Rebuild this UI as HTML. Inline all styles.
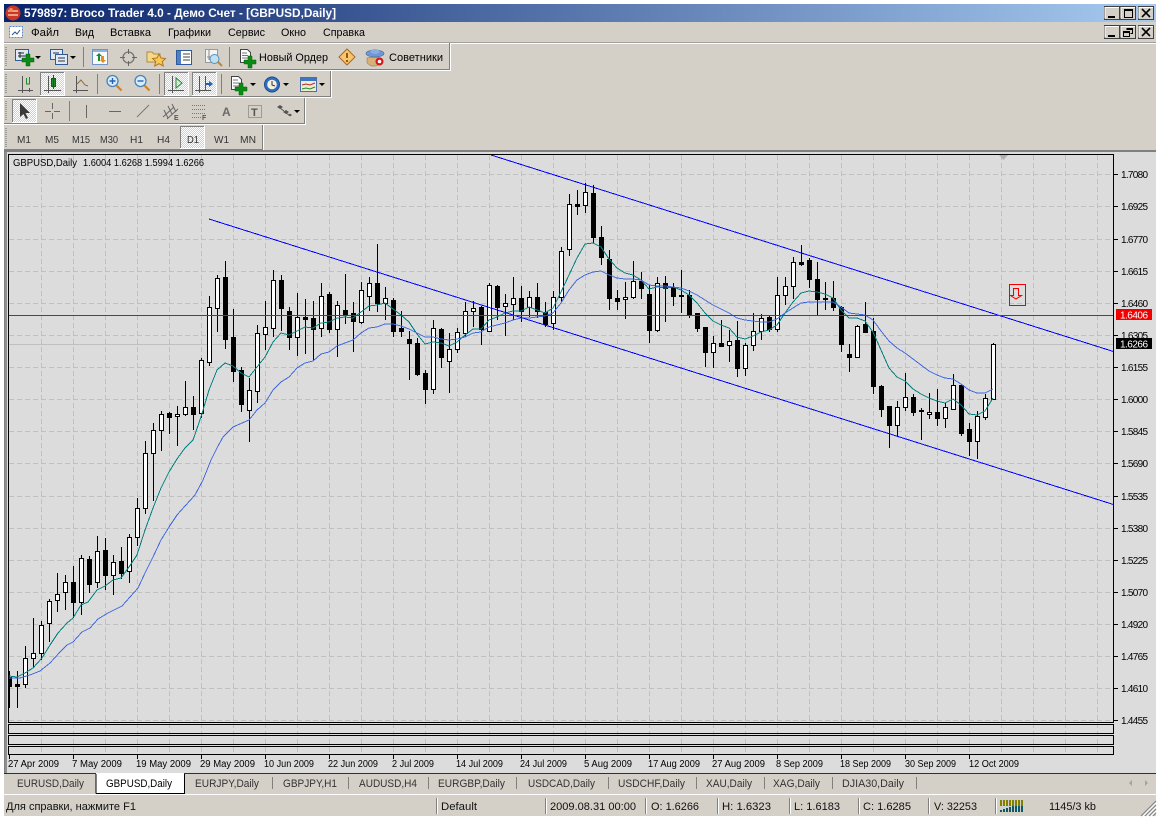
<!DOCTYPE html>
<html><head><meta charset="utf-8"><title>Broco Trader</title>
<style>
html,body{margin:0;padding:0;background:#fff;width:1160px;height:819px;overflow:hidden}
svg{display:block}
text{font-family:"Liberation Sans","Noto Sans CJK SC",sans-serif;font-size:11px;fill:#000}
.c{shape-rendering:crispEdges}
.p text{font-size:10px}
.t text{font-size:11px;fill:#333}
.s text{font-size:11px;fill:#111}
.m text{font-size:10.5px;fill:#333}
</style></head><body>
<svg width="1160" height="819" viewBox="0 0 1160 819" xmlns="http://www.w3.org/2000/svg">
<defs>
<linearGradient id="tb" x1="0" x2="1" y1="0" y2="0"><stop offset="0" stop-color="#0a246a"/><stop offset="1" stop-color="#a6caf0"/></linearGradient>
<pattern id="chk" width="2" height="2" patternUnits="userSpaceOnUse"><rect width="2" height="2" fill="#d4d0c8"/><rect width="1" height="1" fill="#fff"/><rect x="1" y="1" width="1" height="1" fill="#fff"/></pattern>
<clipPath id="cl"><rect x="9" y="155" width="1105" height="567"/></clipPath>
<linearGradient id="bl" x1="0" x2="0" y1="0" y2="1"><stop offset="0" stop-color="#dce8fa"/><stop offset="1" stop-color="#5c8ad0"/></linearGradient>
</defs>
<rect width="1160" height="819" fill="#fff"/>
<rect x="4" y="4" width="1152" height="813" fill="#d4d0c8"/>
<!-- title -->
<rect x="4" y="4" width="1152" height="18" fill="url(#tb)"/>
<circle cx="13" cy="13" r="7.5" fill="#c8372a"/><path d="M8 11h10M8 15h10" stroke="#f3c6a0" stroke-width="1.4"/><circle cx="11" cy="10" r="2" fill="#f08a60"/>
<text x="24" y="17" textLength="312" lengthAdjust="spacingAndGlyphs" style="font-size:12px;font-weight:bold;fill:#fff">579897: Broco Trader 4.0 - Демо Счет - [GBPUSD,Daily]</text>
<!-- window buttons -->
<g class="c">
<g fill="#d4d0c8" stroke="#404040"><rect x="1104.5" y="6.5" width="15" height="13"/><rect x="1120.5" y="6.5" width="15" height="13"/><rect x="1138.5" y="6.5" width="15" height="13"/><rect x="1104.5" y="25.5" width="15" height="13"/><rect x="1120.5" y="25.5" width="15" height="13"/><rect x="1138.5" y="25.5" width="15" height="13"/></g>
<path d="M1105 18.5V7.500h14M1121 18.5V7.500h14M1139 18.5V7.500h14M1105 37.500V26.500h14M1121 37.500V26.500h14M1139 37.500V26.500h14" fill="none" stroke="#fff"/>
<path d="M1108 16h7v2h-7zM1108 35h7v2h-7z" fill="#000"/>
<path d="M1124.500 9.500h8v8h-8zM1124.500 10.500h8" fill="none" stroke="#000"/>
<path d="M1126.500 28.500h6v5h-2M1126.500 29.500h6M1123.500 31.500h6v5h-6zM1123.500 32.500h6" fill="none" stroke="#000"/>
</g>
<path d="M1142 9l8 8M1150 9l-8 8M1142 28l8 8M1150 28l-8 8" stroke="#000" stroke-width="1.600"/>
<!-- menu -->
<g><rect x="9.500" y="26.500" width="13" height="11" fill="#fff" stroke="#5c8ad0" stroke-dasharray="2 1"/><path d="M12 35l3-3 2 2 3-4" stroke="#305090" fill="none"/></g>
<text x="31" y="36" textLength="28" lengthAdjust="spacingAndGlyphs">Файл</text>
<text x="75" y="36" textLength="19" lengthAdjust="spacingAndGlyphs">Вид</text>
<text x="110" y="36" textLength="41" lengthAdjust="spacingAndGlyphs">Вставка</text>
<text x="168" y="36" textLength="43" lengthAdjust="spacingAndGlyphs">Графики</text>
<text x="228" y="36" textLength="37" lengthAdjust="spacingAndGlyphs">Сервис</text>
<text x="281" y="36" textLength="25" lengthAdjust="spacingAndGlyphs">Окно</text>
<text x="323" y="36" textLength="42" lengthAdjust="spacingAndGlyphs">Справка</text>
<!-- toolbar frames -->
<g class="c">
<rect x="4" y="43" width="1152" height="1" fill="#fff"/><rect x="4" y="42" width="1152" height="1" fill="#a0a0a0"/>
<path d="M4 69.500H449.500V43M4 96.500H330.500V71M4 123.500H304.500V98M4 149.500H262.500V125" fill="none" stroke="#808080"/>
<path d="M4 70.500H450.500V43M4 97.500H331.500V71M4 124.500H305.500V98M4 150.500H263.500V125" fill="none" stroke="#fff"/>
<path d="M6 47v20M6 74v20M6 101v20M6 128v19" stroke="#9a9a9a" stroke-width="2" stroke-dasharray="1 1"/>
<path d="M83.500 47v20M229.500 47v20M97.500 74v20M159.500 74v20M221.500 74v20M69.500 101v20" stroke="#808080"/>
<!-- pressed buttons -->
<g fill="url(#chk)"><rect x="40" y="72" width="25" height="24"/><rect x="164" y="72" width="25" height="24"/><rect x="192" y="72" width="25" height="24"/><rect x="12" y="99" width="25" height="24"/><rect x="180" y="126" width="25" height="23"/></g>
<path d="M40.500 95V72.500H65M164.500 95V72.500H189M192.500 95V72.500H217M12.500 122V99.500H37M180.500 148V126.500H205" fill="none" stroke="#808080"/>
<path d="M40 95.500H64.500V72M164 95.500H188.500V72M192 95.500H216.500V72M12 122.500H36.500V99M180 148.500H204.500V126" fill="none" stroke="#fff"/>
</g>
<!-- dropdown arrows -->
<path d="M35 56h6l-3 3zM70 56h6l-3 3zM250 83h6l-3 3zM283 83h6l-3 3zM319 83h6l-3 3zM294 110h6l-3 3z" fill="#000"/>
<!-- row 1 icons -->
<g>
<rect x="15.500" y="49.500" width="13" height="11" fill="#dfe9f8" stroke="#2f5a9a"/><path d="M18 53h6M18 56h8M20 52v6" stroke="#222"/>
<path d="M26 54h4v4h4v4h-4v4h-4v-4h-4v-4h4z" fill="#0b8a14" stroke="#075f0e" stroke-width=".5"/>
<rect x="50.500" y="49.500" width="12" height="10" fill="#dfe9f8" stroke="#2f5a9a"/><rect x="55.500" y="54.500" width="12" height="10" fill="#dfe9f8" stroke="#2f5a9a"/><path d="M53 53h6M58 58h7M58 61h7" stroke="#333"/>
<rect x="92.500" y="49.500" width="15" height="15" fill="#f7fbff" stroke="#6e94c8"/><rect x="93" y="50" width="14" height="2" fill="#8fb4e4"/><path d="M98 61v-5h-2l3-3 3 3h-2v5z" fill="#1c8c28"/><path d="M101 56h3v4h2l-3 3-3-3h1z" fill="#e09020"/>
<circle cx="128.500" cy="57.500" r="5.500" fill="none" stroke="#777" stroke-width="1.300"/><path d="M128.500 49v5M128.500 61v5M120 57.500h5M132 57.500h5" stroke="#666"/>
<path d="M147 52h5l2 2h6v8h-13z" fill="#f3d98c" stroke="#b08a3a"/><path d="M159 54l2 4 4.500 .5-3.200 3 1 4.500-4.300-2.300-4.300 2.300 1-4.500-3.200-3 4.500-.5z" fill="#f7c85a" stroke="#b5761a"/>
<rect x="176.500" y="50.500" width="15" height="14" fill="#fff" stroke="#2f5a9a"/><rect x="177" y="51" width="4" height="13" fill="#4f7fc8"/><path d="M183 54h7M183 57h7M183 60h7" stroke="#444"/>
<rect x="205.500" y="49.500" width="12" height="13" fill="#f4f4f4" stroke="#999"/><path d="M209 50v10M207 57h8" stroke="#888"/><circle cx="214.500" cy="59" r="4.500" fill="#bfe0f2" stroke="#5790b8"/><path d="M218 62l4 4" stroke="#c8852a" stroke-width="2"/>
<path d="M240.500 49.500h7l3 3v10h-10z" fill="#fff" stroke="#444"/><path d="M242 53h5M242 55.500h6M242 58h6" stroke="#777"/>
<path d="M248 56h4v4h4v4h-4v4h-4v-4h-4v-4h4z" fill="#0b8a14" stroke="#075f0e" stroke-width=".5"/>
<path d="M347 49l8 8-8 8-8-8z" fill="#f7c56a" stroke="#a8682a"/><path d="M347 53v5M347 60v2" stroke="#8a4a10" stroke-width="1.800"/>
<path d="M367 58c3-1 11-1 14 0l-1 6-4 2h-5l-4-3z" fill="#d9b077" stroke="#8a6a3a" stroke-width=".5"/><ellipse cx="375" cy="53.500" rx="9" ry="3.500" fill="#6f97d8" stroke="#3d628f" stroke-width=".6"/><ellipse cx="375" cy="51.500" rx="4.500" ry="2.500" fill="#88aee2"/><circle cx="379.500" cy="61.500" r="4" fill="#d91616"/><circle cx="379.500" cy="61.500" r="1.800" fill="#fff"/>
</g>
<text x="259" y="61" textLength="69" lengthAdjust="spacingAndGlyphs">Новый Ордер</text>
<text x="389" y="61" textLength="54" lengthAdjust="spacingAndGlyphs">Советники</text>
<!-- row 2 icons -->
<g fill="none" stroke="#555">
<path d="M22.500 76v17M29.500 88v4M18 90.500h15" class="c"/><path d="M26.500 78v6h3v-7" stroke="#1c8c28" class="c"/>
<path d="M48.500 76v17M18 0" class="c"/><path d="M44 90.500h17" class="c"/><rect x="51.500" y="78.500" width="4" height="8" fill="#1c8c28" stroke="#0e5e16" class="c"/><path d="M53.500 75v14" stroke="#0e5e16" class="c"/>
<path d="M76.500 76v17M73 90.500h15" class="c"/><path d="M77 84l4-4 4 5 3 1" stroke="#8a6a3a"/>
</g>
<circle cx="112.500" cy="81" r="5.500" fill="#d7ecfa" stroke="#4a85b8" stroke-width="1.300"/><path d="M109.500 81h6M112.500 78v6" stroke="#2a62b0" stroke-width="1.400"/><path d="M116.500 85.500l5 5" stroke="#c8852a" stroke-width="2.200"/>
<circle cx="140.500" cy="81" r="5.500" fill="#d7ecfa" stroke="#4a85b8" stroke-width="1.300"/><path d="M137.500 81h6" stroke="#2a62b0" stroke-width="1.400"/><path d="M144.500 85.500l5 5" stroke="#c8852a" stroke-width="2.200"/>
<g class="c" fill="none" stroke="#555"><path d="M172.500 76v17M168 90.500h16M199.500 76v17M195 90.500h16M205.500 76v14"/></g>
<path d="M176 78l6 5-6 5z" fill="none" stroke="#1c8c28"/><path d="M213 84l-4-3v2h-3v2h3v2z" fill="#1f5fb8"/>
<path d="M231.500 76.500h7l3 3v10h-10z" fill="#fff" stroke="#444"/><path d="M233 80h5M233 83h6M233 86h6" stroke="#777"/>
<path d="M239 83h4v4h4v4h-4v4h-4v-4h-4v-4h4z" fill="#0b8a14" stroke="#075f0e" stroke-width=".5"/>
<circle cx="272" cy="84.500" r="7.500" fill="#2f6ec0" stroke="#1d4a8a"/><circle cx="272" cy="84.500" r="4.800" fill="#f5efe0"/><path d="M272 81v4l3 1" stroke="#333" fill="none"/>
<rect x="300.500" y="77.500" width="16" height="14" fill="#f1ead8" stroke="#4a6ea8"/><rect x="301" y="78" width="15" height="3" fill="#3f74c4"/><path d="M302 85l4-1 4 1 5-2" stroke="#b03020" fill="none"/><path d="M302 89l4-1 4 1 5-2" stroke="#1c8c28" fill="none"/>
<!-- row 3 icons -->
<path d="M20 103l0 14 3.500-3 2.500 5 2-1-2.500-5h4.500z" fill="#3a3a3a"/>
<g stroke="#666" class="c"><path d="M52.500 103v6M52.500 113v6M45 111.500h6M54 111.500h6M86.500 105v13M109 111.500h12"/></g>
<path d="M137 117l12-12" stroke="#777" fill="none"/>
<path d="M163 117l11-10M167 119l11-10M168 106l4 8M172 104l4 8M164 110l4 8" stroke="#666" fill="none"/>
<text x="174" y="120" style="font-size:7px;font-weight:bold;fill:#555">E</text>
<path d="M192 105.500h14M192 109.500h14M192 113.500h14M192 117.500h9" stroke="#777" stroke-dasharray="1 1" class="c"/>
<text x="202" y="120" style="font-size:7px;font-weight:bold;fill:#555">F</text>
<text x="222" y="116" style="font-size:12px;font-weight:bold;fill:#6a6a6a">A</text>
<rect x="248.500" y="105.500" width="13" height="12" fill="none" stroke="#666" stroke-dasharray="1 1" class="c"/><text x="251" y="116" style="font-size:11px;font-weight:bold;fill:#555">T</text>
<path d="M277 107l3-2 3 2-3 2zM283 112l3-2 3 2-3 2zM288 115l2-1.500 2 1.500-2 1.500z" fill="#555"/><path d="M280 108l4 3M286 113l3 2" stroke="#555"/>
<!-- row 4 -->
<g class="m">
<text x="17" y="143" textLength="14" lengthAdjust="spacingAndGlyphs">M1</text>
<text x="45" y="143" textLength="14" lengthAdjust="spacingAndGlyphs">M5</text>
<text x="72" y="143" textLength="18" lengthAdjust="spacingAndGlyphs">M15</text>
<text x="100" y="143" textLength="18" lengthAdjust="spacingAndGlyphs">M30</text>
<text x="130" y="143" textLength="13" lengthAdjust="spacingAndGlyphs">H1</text>
<text x="157" y="143" textLength="13" lengthAdjust="spacingAndGlyphs">H4</text>
<text x="187" y="143" textLength="12" lengthAdjust="spacingAndGlyphs">D1</text>
<text x="214" y="143" textLength="15" lengthAdjust="spacingAndGlyphs">W1</text>
<text x="240" y="143" textLength="16" lengthAdjust="spacingAndGlyphs">MN</text>
</g>
<!-- chart window -->
<rect x="4" y="151" width="1152" height="622" fill="#dcdcdc"/>
<g class="c"><rect x="4" y="150" width="1152" height="2" fill="#808080"/><rect x="4" y="150" width="3" height="623" fill="#808080"/><rect x="5" y="152" width="2" height="621" fill="#909090"/></g>
<!-- grid -->
<g class="c" stroke="#c0c0c0" stroke-dasharray="5 3" fill="none">
<path d="M41.500 155V754M73.500 155V754M105.500 155V754M137.500 155V754M169.500 155V754M201.500 155V754M233.500 155V754M265.500 155V754M297.500 155V754M329.500 155V754M361.500 155V754M393.500 155V754M425.500 155V754M457.500 155V754M489.500 155V754M521.500 155V754M553.500 155V754M585.500 155V754M617.500 155V754M649.500 155V754M681.500 155V754M713.500 155V754M745.500 155V754M777.500 155V754M809.500 155V754M841.500 155V754M873.500 155V754M905.500 155V754M937.500 155V754M969.500 155V754M1001.500 155V754M1033.500 155V754M1065.500 155V754M1097.500 155V754"/>
<path d="M9 174.500H1114M9 206.500H1114M9 239.500H1114M9 271.500H1114M9 303.500H1114M9 335.500H1114M9 367.500H1114M9 399.500H1114M9 431.500H1114M9 463.500H1114M9 496.500H1114M9 528.500H1114M9 560.500H1114M9 592.500H1114M9 624.500H1114M9 656.500H1114M9 688.500H1114M9 720.500H1114"/>
</g>
<rect class="c" x="9" y="344" width="1105" height="1" fill="#c0c0c0"/>
<g clip-path="url(#cl)">
<g class="c" fill="none" stroke="#000">
<path d="M9.500 671V708M17.500 671V708M25.500 646V688M33.500 618V668M41.500 621V660M49.500 599V642M57.500 573V612M65.500 575V610M73.500 566V618M81.500 555V615M89.500 556V593M97.500 536V588M105.500 538V590M113.500 555V595M121.500 547V579M129.500 534V583M137.500 498V546M145.500 441V514M153.500 423V501M161.500 411V451M169.500 412V434M177.500 406V446M185.500 381V416M193.500 396V430M201.500 358V418M209.500 296V366M217.500 275V332M225.500 261V349M233.500 309V382M241.500 367V412M249.500 378V442M257.500 325V403M265.500 301V350M273.500 270V337M281.500 275V331M289.500 307V350M297.500 293V356M305.500 299V354M313.500 301V361M321.500 283V337M329.500 292V333M337.500 301V357M345.500 274V324M353.500 302V352M361.500 282V324M369.500 277V311M377.500 244V312M385.500 287V320M393.500 298V337M401.500 311V337M409.500 331V380M417.500 338V376M425.500 370V404M433.500 320V394M441.500 328V368M449.500 333V393M457.500 328V353M465.500 302V337M473.500 301V327M481.500 306V345M489.500 283V332M497.500 285V320M505.500 294V336M513.500 277V320M521.500 286V322M529.500 291V317M537.500 283V318M545.500 302V327M553.500 291V330M561.500 247V302M569.500 194V256M577.500 190V215M585.500 183V213M593.500 185V243M601.500 226V265M609.500 250V310M617.500 290V310M625.500 282V319M633.500 261V299M641.500 272V299M649.500 285V343M657.500 277V332M665.500 276V322M673.500 283V306M681.500 270V313M689.500 290V318M697.500 313V332M705.500 327V367M713.500 336V368M721.500 320V347M729.500 330V362M737.500 321V377M745.500 343V376M753.500 313V351M761.500 314V340M769.500 315V332M777.500 277V332M785.500 277V305M793.500 257V299M801.500 245V266M809.500 258V288M817.500 262V315M825.500 282V310M833.500 281V311M841.500 306V352M849.500 344V372M857.500 325V357M865.500 302V332M873.500 318V394M881.500 385V417M889.500 406V448M897.500 401V436M905.500 373V411M913.500 394V416M921.500 408V440M929.500 393V419M937.500 389V426M945.500 403V428M953.500 374V410M961.500 385V436M969.500 423V456M977.500 411V459M985.500 394V420M993.500 343V400"/>
<path fill="#fff" d="M23.500 658.500h4V684.500h-4zM31.500 653.500h4V658.500h-4zM39.500 625.500h4V653.500h-4zM47.500 601.500h4V623.500h-4zM55.500 594.500h4V600.500h-4zM63.500 582.500h4V592.500h-4zM79.500 558.500h4V602.500h-4zM95.500 551.500h4V582.500h-4zM111.500 562.500h4V575.500h-4zM127.500 537.500h4V571.500h-4zM135.500 508.500h4V537.500h-4zM143.500 453.500h4V508.500h-4zM151.500 430.500h4V453.500h-4zM159.500 414.500h4V430.500h-4zM175.500 414.500h4V416.500h-4zM183.500 407.500h4V414.500h-4zM199.500 360.500h4V413.500h-4zM207.500 307.500h4V362.500h-4zM215.500 278.500h4V308.500h-4zM247.500 390.500h4V410.500h-4zM255.500 333.500h4V391.500h-4zM263.500 327.500h4V334.500h-4zM271.500 280.500h4V328.500h-4zM295.500 317.500h4V337.500h-4zM319.500 296.500h4V328.500h-4zM335.500 305.500h4V329.500h-4zM359.500 290.500h4V322.500h-4zM367.500 283.500h4V296.500h-4zM383.500 298.500h4V303.500h-4zM431.500 328.500h4V389.500h-4zM447.500 349.500h4V361.500h-4zM455.500 332.500h4V349.500h-4zM463.500 311.500h4V333.500h-4zM471.500 308.500h4V311.500h-4zM487.500 285.500h4V331.500h-4zM503.500 303.500h4V306.500h-4zM511.500 298.500h4V304.500h-4zM527.500 297.500h4V307.500h-4zM551.500 297.500h4V323.500h-4zM559.500 251.500h4V297.500h-4zM567.500 204.500h4V249.500h-4zM583.500 192.500h4V205.500h-4zM623.500 297.500h4V299.500h-4zM631.500 281.500h4V297.500h-4zM655.500 283.500h4V330.500h-4zM711.500 343.500h4V352.500h-4zM727.500 341.500h4V345.500h-4zM743.500 345.500h4V368.500h-4zM751.500 331.500h4V345.500h-4zM759.500 318.500h4V331.500h-4zM775.500 295.500h4V329.500h-4zM783.500 286.500h4V295.500h-4zM791.500 262.500h4V286.500h-4zM855.500 326.500h4V357.500h-4zM895.500 407.500h4V425.500h-4zM903.500 397.500h4V407.500h-4zM927.500 412.500h4V414.500h-4zM943.500 407.500h4V418.500h-4zM951.500 385.500h4V409.500h-4zM975.500 416.500h4V441.500h-4zM983.500 398.500h4V417.500h-4zM991.500 344.500h4V399.500h-4z"/>
<path fill="#000" d="M7.500 677.500h4V686.500h-4zM15.500 684.500h4V686.500h-4zM71.500 582.500h4V602.500h-4zM87.500 559.500h4V584.500h-4zM103.500 550.500h4V575.500h-4zM119.500 561.500h4V573.500h-4zM167.500 413.500h4V417.500h-4zM191.500 407.500h4V414.500h-4zM223.500 277.500h4V339.500h-4zM231.500 337.500h4V371.500h-4zM239.500 370.500h4V404.500h-4zM279.500 280.500h4V308.500h-4zM287.500 311.500h4V337.500h-4zM303.500 317.500h4V319.500h-4zM311.500 318.500h4V329.500h-4zM327.500 294.500h4V329.500h-4zM343.500 310.500h4V314.500h-4zM351.500 313.500h4V321.500h-4zM375.500 283.500h4V303.500h-4zM391.500 300.500h4V331.500h-4zM399.500 328.500h4V331.500h-4zM407.500 339.500h4V343.500h-4zM415.500 343.500h4V374.500h-4zM423.500 373.500h4V389.500h-4zM439.500 329.500h4V357.500h-4zM479.500 307.500h4V329.500h-4zM495.500 286.500h4V307.500h-4zM519.500 298.500h4V311.500h-4zM535.500 297.500h4V311.500h-4zM543.500 312.500h4V324.500h-4zM575.500 204.500h4V206.500h-4zM591.500 193.500h4V237.500h-4zM599.500 237.500h4V257.500h-4zM607.500 259.500h4V298.500h-4zM615.500 298.500h4V301.500h-4zM639.500 281.500h4V288.500h-4zM647.500 294.500h4V330.500h-4zM663.500 283.500h4V288.500h-4zM671.500 287.500h4V296.500h-4zM679.500 295.500h4V296.500h-4zM687.500 295.500h4V314.500h-4zM695.500 313.500h4V328.500h-4zM703.500 327.500h4V352.500h-4zM719.500 343.500h4V346.500h-4zM735.500 340.500h4V368.500h-4zM767.500 317.500h4V329.500h-4zM799.500 262.500h4V264.500h-4zM807.500 260.500h4V279.500h-4zM815.500 279.500h4V299.500h-4zM823.500 298.500h4V299.500h-4zM831.500 298.500h4V307.500h-4zM839.500 307.500h4V344.500h-4zM847.500 354.500h4V357.500h-4zM863.500 324.500h4V332.500h-4zM871.500 331.500h4V386.500h-4zM879.500 386.500h4V409.500h-4zM887.500 406.500h4V425.500h-4zM911.500 397.500h4V412.500h-4zM919.500 410.500h4V411.500h-4zM935.500 412.500h4V418.500h-4zM959.500 385.500h4V433.500h-4zM967.500 429.500h4V441.500h-4z"/>
</g>
<polyline fill="none" stroke="#008080" class="c" points="9,676 17,677 25,673 33,668 42,658 50,645 58,633 67,623 73,618 81,605 88,602 97,590 105,586 113,580 121,578 129,567 137,555 145,530 153,508 161,488 169,472 177,459 185,448 193,440 201,417 209,390 217,370 225,363 233,366 241,373 249,377 257,367 265,357 273,342 281,333 289,335 297,331 305,327 313,328 321,323 329,322 337,318 345,317 353,318 361,312 369,306 377,305 385,303 393,309 401,315 409,322 417,334 425,344 433,342 441,343 449,346 457,342 465,335 473,329 481,329 489,320 497,317 505,313 513,311 521,311 529,307 537,310 545,313 553,308 561,292 569,275 577,258 585,244 593,243 601,247 609,259 617,268 625,273 633,275 641,280 649,289 657,287 665,288 673,287 681,290 689,295 697,303 705,313 713,321 721,325 729,328 737,337 745,339 753,336 761,332 769,330 777,325 785,313 793,302 801,293 809,291 817,292 825,294 833,298 841,310 849,318 857,318 865,321 873,332 881,350 889,368 897,377 905,381 913,389 921,394 929,398 937,401 945,403 953,399 961,405 969,414 977,415 985,411 993,398"/>
<polyline fill="none" stroke="#4169e1" class="c" points="9,678 20,678 30,675 40,671 50,663 60,652 67,645 73,642 82,632 90,628 98,619 108,613 122,606 130,597 138,588 145,573 153,557 161,540 169,527 177,515 185,506 195,495 203,480 211,460 217,448 223,437 233,427 249,420 257,410 265,403 273,390 281,382 289,377 297,368 305,363 313,361 321,354 329,352 337,346 345,343 353,340 361,333 369,328 377,327 385,324 393,324 401,326 409,329 417,333 425,337 433,337 441,339 449,340 457,339 465,337 473,333 481,332 489,327 497,325 505,323 513,320 521,318 529,318 537,317 545,316 553,313 561,303 569,290 577,280 585,275 593,272 601,271 609,275 617,278 625,279 633,279 641,280 649,285 657,286 665,286 673,287 681,288 689,291 697,295 705,300 713,305 721,309 729,313 737,318 745,320 753,321 761,322 769,322 777,319 785,313 793,308 801,303 809,302 817,302 825,302 833,302 841,307 849,313 857,314 865,315 873,320 881,331 889,341 897,348 905,353 913,359 921,365 929,371 937,375 945,378 953,379 961,384 969,390 977,393 985,393 993,389"/>
<path d="M491 155L1115 352M209 219L1115 505" stroke="#0000ff" class="c" fill="none"/>
<rect class="c" x="9" y="315" width="1105" height="1" fill="#f00000"/>
</g>
<path d="M999 155h9l-4.500 5z" fill="#b0b0b0"/>
<!-- arrow object -->
<rect class="c" x="1009.500" y="284.500" width="16" height="21" fill="none" stroke="#f00000"/>
<path d="M1013.500 288.500h5v7h3l-5.500 3.500-5.500-3.500h3z" fill="none" stroke="#f00000"/>
<!-- frames -->
<g class="c" fill="none" stroke="#000">
<rect x="8.500" y="154.500" width="1105" height="568"/>
<rect x="8.500" y="724.500" width="1105" height="9"/>
<rect x="8.500" y="735.500" width="1105" height="9"/>
<rect x="8.500" y="746.500" width="1105" height="8"/>
<path d="M1114 174.500h4M1114 206.500h4M1114 239.500h4M1114 271.500h4M1114 303.500h4M1114 335.500h4M1114 367.500h4M1114 399.500h4M1114 431.500h4M1114 463.500h4M1114 496.500h4M1114 528.500h4M1114 560.500h4M1114 592.500h4M1114 624.500h4M1114 656.500h4M1114 688.500h4M1114 720.500h4"/>
<path d="M9.500 755v4M73.500 755v4M137.500 755v4M201.500 755v4M265.500 755v4M329.500 755v4M393.500 755v4M457.500 755v4M521.500 755v4M585.500 755v4M649.500 755v4M713.500 755v4M777.500 755v4M841.500 755v4M905.500 755v4M969.500 755v4"/>
</g>
<g class="p">
<text x="13" y="166" textLength="64" lengthAdjust="spacingAndGlyphs">GBPUSD,Daily</text>
<text x="83" y="166" textLength="121" lengthAdjust="spacingAndGlyphs">1.6004 1.6268 1.5994 1.6266</text>
<text x="1121" y="178" textLength="27">1.7080</text>
<text x="1121" y="210" textLength="27">1.6925</text>
<text x="1121" y="243" textLength="27">1.6770</text>
<text x="1121" y="275" textLength="27">1.6615</text>
<text x="1121" y="307" textLength="27">1.6460</text>
<text x="1121" y="339" textLength="27">1.6305</text>
<text x="1121" y="371" textLength="27">1.6155</text>
<text x="1121" y="403" textLength="27">1.6000</text>
<text x="1121" y="435" textLength="27">1.5845</text>
<text x="1121" y="467" textLength="27">1.5690</text>
<text x="1121" y="500" textLength="27">1.5535</text>
<text x="1121" y="532" textLength="27">1.5380</text>
<text x="1121" y="564" textLength="27">1.5225</text>
<text x="1121" y="596" textLength="27">1.5070</text>
<text x="1121" y="628" textLength="27">1.4920</text>
<text x="1121" y="660" textLength="27">1.4765</text>
<text x="1121" y="692" textLength="27">1.4610</text>
<text x="1121" y="724" textLength="27">1.4455</text>
<rect class="c" x="1116" y="309" width="36" height="11" fill="#f00000"/>
<text x="1120" y="318.500" textLength="28" style="fill:#fff;font-size:10px">1.6406</text>
<rect class="c" x="1116" y="338" width="36" height="11" fill="#000"/>
<text x="1120" y="347.500" textLength="28" style="fill:#fff;font-size:10px">1.6266</text>
<text x="8" y="767" textLength="51" lengthAdjust="spacingAndGlyphs">27 Apr 2009</text>
<text x="72" y="767" textLength="50" lengthAdjust="spacingAndGlyphs">7 May 2009</text>
<text x="136" y="767" textLength="55" lengthAdjust="spacingAndGlyphs">19 May 2009</text>
<text x="200" y="767" textLength="55" lengthAdjust="spacingAndGlyphs">29 May 2009</text>
<text x="264" y="767" textLength="50" lengthAdjust="spacingAndGlyphs">10 Jun 2009</text>
<text x="328" y="767" textLength="50" lengthAdjust="spacingAndGlyphs">22 Jun 2009</text>
<text x="392" y="767" textLength="42" lengthAdjust="spacingAndGlyphs">2 Jul 2009</text>
<text x="456" y="767" textLength="47" lengthAdjust="spacingAndGlyphs">14 Jul 2009</text>
<text x="520" y="767" textLength="47" lengthAdjust="spacingAndGlyphs">24 Jul 2009</text>
<text x="584" y="767" textLength="48" lengthAdjust="spacingAndGlyphs">5 Aug 2009</text>
<text x="648" y="767" textLength="52" lengthAdjust="spacingAndGlyphs">17 Aug 2009</text>
<text x="712" y="767" textLength="53" lengthAdjust="spacingAndGlyphs">27 Aug 2009</text>
<text x="776" y="767" textLength="47" lengthAdjust="spacingAndGlyphs">8 Sep 2009</text>
<text x="840" y="767" textLength="51" lengthAdjust="spacingAndGlyphs">18 Sep 2009</text>
<text x="905" y="767" textLength="51" lengthAdjust="spacingAndGlyphs">30 Sep 2009</text>
<text x="969" y="767" textLength="50" lengthAdjust="spacingAndGlyphs">12 Oct 2009</text>
</g>
<!-- tab bar -->
<g class="c">
<rect x="4" y="773" width="1152" height="21" fill="#d4d0c8"/>
<rect x="4" y="773" width="1152" height="1" fill="#303030"/>
<rect x="96" y="773" width="88" height="20" fill="#fff"/>
<path d="M184.500 774V793.500H96M96 793.500V774" fill="none" stroke="#000"/>
<path d="M272.500 777v12M348.500 777v12M428.500 777v12M516.500 777v12M608.500 777v12M696.500 777v12M764.500 777v12M832.500 777v12M916.500 777v12" stroke="#808080"/>
<rect x="4" y="794" width="1152" height="1" fill="#fff"/>
<rect x="4" y="816" width="1152" height="3" fill="#fff"/>
</g>
<g class="t">
<text x="17" y="787" textLength="67" lengthAdjust="spacingAndGlyphs">EURUSD,Daily</text>
<text x="106" y="787" textLength="66" lengthAdjust="spacingAndGlyphs" style="fill:#000">GBPUSD,Daily</text>
<text x="195" y="787" textLength="64" lengthAdjust="spacingAndGlyphs">EURJPY,Daily</text>
<text x="283" y="787" textLength="54" lengthAdjust="spacingAndGlyphs">GBPJPY,H1</text>
<text x="359" y="787" textLength="58" lengthAdjust="spacingAndGlyphs">AUDUSD,H4</text>
<text x="438" y="787" textLength="67" lengthAdjust="spacingAndGlyphs">EURGBP,Daily</text>
<text x="528" y="787" textLength="67" lengthAdjust="spacingAndGlyphs">USDCAD,Daily</text>
<text x="618" y="787" textLength="67" lengthAdjust="spacingAndGlyphs">USDCHF,Daily</text>
<text x="706" y="787" textLength="46" lengthAdjust="spacingAndGlyphs">XAU,Daily</text>
<text x="773" y="787" textLength="47" lengthAdjust="spacingAndGlyphs">XAG,Daily</text>
<text x="842" y="787" textLength="62" lengthAdjust="spacingAndGlyphs">DJIA30,Daily</text>
</g>
<path d="M1132 780v6l-3-3zM1145 780v6l3-3z" fill="#a8a49c"/>
<!-- status -->
<g class="c">
<path d="M436.500 798v16M545.500 798v16M645.500 798v16M717.500 798v16M789.500 798v16M858.500 798v16M928.500 798v16M995.500 798v16" stroke="#808080"/>
<path d="M437.500 798v16M546.500 798v16M646.500 798v16M718.500 798v16M790.500 798v16M859.500 798v16M929.500 798v16M996.500 798v16" stroke="#fff"/>
<path d="M1000 800h2v6h-2zM1003 800h2v6h-2zM1006 800h2v6h-2zM1009 800h2v6h-2zM1012 800h2v6h-2zM1015 800h2v6h-2zM1018 800h2v6h-2zM1021 800h2v6h-2z" fill="#808000"/>
<path d="M1000 810h2v2h-2zM1003 809h2v3h-2zM1006 808h2v4h-2zM1009 807h2v5h-2zM1012 806h2v6h-2zM1015 806h2v6h-2zM1018 806h2v6h-2zM1021 806h2v6h-2z" fill="#0a5a6a"/>
</g>
<path d="M1141 816l15-15M1145 816l11-11M1149 816l7-7M1153 816l3-3" stroke="#808080" fill="none"/>
<path d="M1143 816l13-13M1147 816l9-9M1151 816l5-5" stroke="#fff" fill="none"/>
<g class="s">
<text x="6" y="810" textLength="130" lengthAdjust="spacingAndGlyphs">Для справки, нажмите F1</text>
<text x="441" y="810" textLength="36" lengthAdjust="spacingAndGlyphs">Default</text>
<text x="550" y="810" textLength="86" lengthAdjust="spacingAndGlyphs">2009.08.31 00:00</text>
<text x="651" y="810" textLength="48" lengthAdjust="spacingAndGlyphs">O: 1.6266</text>
<text x="722" y="810" textLength="49" lengthAdjust="spacingAndGlyphs">H: 1.6323</text>
<text x="794" y="810" textLength="46" lengthAdjust="spacingAndGlyphs">L: 1.6183</text>
<text x="863" y="810" textLength="48" lengthAdjust="spacingAndGlyphs">C: 1.6285</text>
<text x="934" y="810" textLength="43" lengthAdjust="spacingAndGlyphs">V: 32253</text>
<text x="1049" y="810" textLength="47" lengthAdjust="spacingAndGlyphs">1145/3 kb</text>
</g>
</svg>
</body></html>
